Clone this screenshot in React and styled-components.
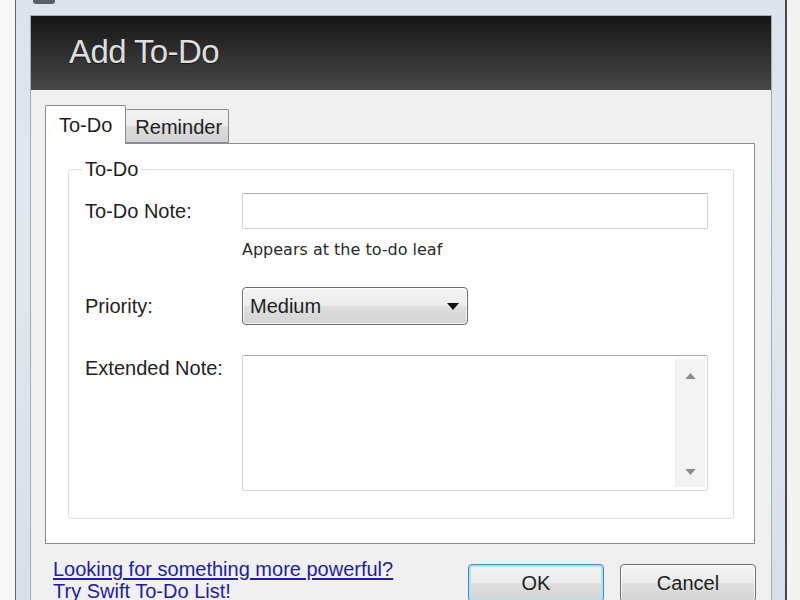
import React from 'react';
import styled, { createGlobalStyle } from 'styled-components';

const GlobalStyle = createGlobalStyle`
  *, *::before, *::after { box-sizing: border-box; }
  html, body { margin: 0; padding: 0; background: #f6f6f6; }
  body { font-family: "Liberation Sans", Arial, sans-serif; }
`;

const Page = styled.div`
  width: 800px;
  height: 600px;
  overflow: hidden;
  background: linear-gradient(90deg, #f7f7f7, #f2f2f2);
`;

const Window = styled.div`
  margin-left: 15px;
  width: 772px;
  height: 640px;
  border-left: 1px solid #5f646b;
  border-right: 2px solid #45494f;
  padding: 0 13px 0 14px;
  background: linear-gradient(#dbe4ee, #e0e7ef 40%, #d6dee7);
`;

const TopStrip = styled.div`
  height: 15px;
  display: flex;
  align-items: flex-start;
  padding-left: 3px;
`;

const AppIcon = styled.div`
  width: 22px;
  height: 4px;
  background: #5b6068;
  border-radius: 0 0 3px 3px;
`;

const Client = styled.div`
  background: #f0f0f0;
  border: 1px solid #a3acb6;
  border-bottom: none;
  height: 625px;
`;

const Header = styled.div`
  height: 74px;
  display: flex;
  align-items: center;
  padding-left: 38px;
  background: linear-gradient(#151515, #2d2d2d 45%, #474747);
`;

const Title = styled.h1`
  margin: 0 0 2px;
  font-family: "Liberation Sans", Arial, sans-serif;
  font-weight: normal;
  font-size: 33px;
  letter-spacing: -0.6px;
  color: #dedede;
  text-shadow: 0 1px 1px rgba(0, 0, 0, 0.6);
`;

const Body = styled.div`
  padding: 15px 16px 0 14px;
`;

const TabStrip = styled.div`
  display: flex;
  align-items: flex-end;
  height: 39px;
  margin-bottom: -1px;
`;

const Tab = styled.div`
  position: relative;
  z-index: ${p => (p.$active ? 1 : 0)};
  height: ${p => (p.$active ? '39px' : '34px')};
  margin-bottom: ${p => (p.$active ? '0' : '1px')};
  padding: ${p => (p.$active ? '0 13px' : '2px 6px 0 9px')};
  display: flex;
  align-items: center;
  border: 1px solid #898c95;
  border-left: ${p => (p.$active ? '1px solid #898c95' : 'none')};
  border-bottom: ${p => (p.$active ? 'none' : '1px solid #898c95')};
  border-radius: 2px 2px 0 0;
  background: ${p =>
    p.$active ? '#ffffff' : 'linear-gradient(#f3f3f3, #ebebeb 50%, #dcdcdc 51%, #d2d2d2)'};
  font-size: 20px;
  color: #1e1e1e;
`;

const Panel = styled.div`
  background: #ffffff;
  border: 1px solid #898c95;
  padding: 13px 20px 24px 22px;
`;

const Group = styled.fieldset`
  margin: 0;
  border: 1px solid #d5dfe5;
  border-radius: 3px;
  padding: 0 24px 27px 16px;
  min-width: 0;
`;

const Legend = styled.legend`
  padding: 0 3px;
  margin-left: -3px;
  font-size: 20px;
  line-height: 24px;
  color: #1e1e1e;
`;

const Row = styled.div`
  display: grid;
  grid-template-columns: 157px 1fr;
  align-items: ${p => p.$align || 'center'};
  margin-top: ${p => p.$gap}px;
`;

const Label = styled.label`
  font-size: 20px;
  color: #222;
  padding-top: ${p => p.$pad || 0}px;
`;

const TextBox = styled.input`
  height: 36px;
  width: 466px;
  border: 1px solid #d2d4da;
  border-top-color: #abadb3;
  border-radius: 2px;
  background: #fff;
  outline: none;
  font-size: 18px;
  padding: 0 6px;
`;

const Hint = styled.div`
  margin: 13px 0 0 157px;
  font-family: "DejaVu Sans", Verdana, sans-serif;
  font-size: 16px;
  line-height: 16px;
  color: #2a2a2a;
`;

const Select = styled.div`
  width: 226px;
  height: 38px;
  display: flex;
  align-items: center;
  justify-content: space-between;
  padding: 0 8px 0 7px;
  border: 1px solid #707070;
  border-radius: 4px;
  background: linear-gradient(#f4f4f4, #ececec 48%, #dfdfdf 52%, #d3d3d3);
  box-shadow: inset 0 0 0 1px rgba(255, 255, 255, 0.7);
  font-size: 20px;
  color: #1e1e1e;
`;

const NoteArea = styled.div`
  width: 466px;
  height: 136px;
  display: flex;
  justify-content: flex-end;
  padding: 3px 2px 3px 0;
  border: 1px solid #d2d4da;
  border-top-color: #abadb3;
  border-radius: 2px;
  background: #fff;
`;

const ScrollTrack = styled.div`
  width: 30px;
  display: flex;
  flex-direction: column;
  justify-content: space-between;
  align-items: center;
  padding: 14px 0 12px;
  background: #f3f3f3;
  border-left: 1px solid #ececec;
`;

const Footer = styled.div`
  display: flex;
  justify-content: space-between;
  align-items: flex-start;
  padding: 14px 0 0 8px;
`;

const Links = styled.div`
  display: flex;
  flex-direction: column;
`;

const Link = styled.a`
  font-size: 20px;
  line-height: 22px;
  color: #1f1f9c;
  text-decoration: underline;
  text-underline-offset: 2px;
`;

const Buttons = styled.div`
  display: flex;
  gap: 16px;
  margin-top: 6px;
  margin-right: -1px;
`;

const Button = styled.button`
  width: 136px;
  height: 38px;
  border: 1px solid ${p => (p.$primary ? '#3c8bb8' : '#707070')};
  border-radius: 4px;
  background: linear-gradient(#f4f4f4, #ececec 48%, #dfdfdf 52%, #d3d3d3);
  box-shadow: ${p =>
    p.$primary ? 'inset 0 0 0 2px #aee3f7' : 'inset 0 0 0 1px rgba(255,255,255,0.75)'};
  font-family: "Liberation Sans", Arial, sans-serif;
  font-size: 20px;
  color: #1e1e1e;
  padding: 0;
`;

function Arrow({ up, color = '#111', w = 12, h = 7 }) {
  return (
    <svg width={w} height={h} viewBox="0 0 12 7">
      <path d={up ? 'M0 7 L6 0 L12 7 Z' : 'M0 0 L12 0 L6 7 Z'} fill={color} />
    </svg>
  );
}

export default function App() {
  return (
    <Page>
      <GlobalStyle />
      <Window>
        <TopStrip>
          <AppIcon />
        </TopStrip>
        <Client>
          <Header>
            <Title>Add To-Do</Title>
          </Header>
          <Body>
            <TabStrip>
              <Tab $active>To-Do</Tab>
              <Tab>Reminder</Tab>
            </TabStrip>
            <Panel>
              <Group>
                <Legend>To-Do</Legend>
                <Row $gap={12}>
                  <Label>To-Do Note:</Label>
                  <TextBox type="text" />
                </Row>
                <Hint>Appears at the to-do leaf</Hint>
                <Row $gap={29}>
                  <Label>Priority:</Label>
                  <Select>
                    <span>Medium</span>
                    <Arrow />
                  </Select>
                </Row>
                <Row $gap={30} $align="start">
                  <Label $pad={2}>Extended Note:</Label>
                  <NoteArea>
                    <ScrollTrack>
                      <Arrow up color="#8a8a8a" w={13} h={6} />
                      <Arrow color="#8a8a8a" w={13} h={6} />
                    </ScrollTrack>
                  </NoteArea>
                </Row>
              </Group>
            </Panel>
            <Footer>
              <Links>
                <Link href="#">Looking for something more powerful?</Link>
                <Link href="#">Try Swift To-Do List!</Link>
              </Links>
              <Buttons>
                <Button $primary>OK</Button>
                <Button>Cancel</Button>
              </Buttons>
            </Footer>
          </Body>
        </Client>
      </Window>
    </Page>
  );
}
